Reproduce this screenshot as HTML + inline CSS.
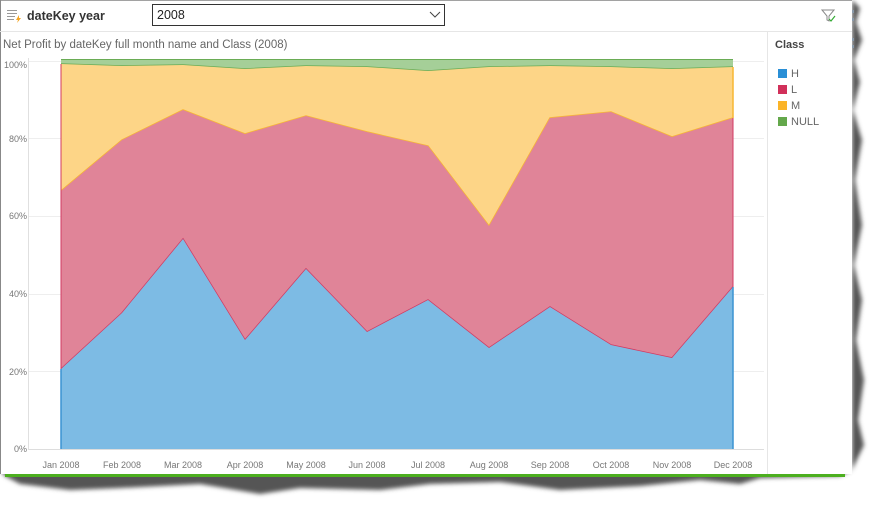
<!DOCTYPE html>
<html><head><meta charset="utf-8"><style>
body{margin:0;width:892px;height:515px;background:#fff;position:relative;overflow:hidden;font-family:"Liberation Sans",sans-serif}
</style></head><body>
<svg width="892" height="515" style="position:absolute;left:0;top:0" font-family="Liberation Sans, sans-serif">
<defs><filter id="b"><feGaussianBlur stdDeviation="2"/></filter></defs>
<!-- shadow/torn edges -->
<path d="M852,0 L860,8 L856,22 L862,40 L854,60 L860,82 L853,110 L862,140 L855,180 L862,225 L854,265 L862,300 L856,340 L864,380 L858,420 L864,445 L852,470 L840,476 L760,478 L740,484 L700,480 L640,486 L560,490 L500,482 L430,484 L380,490 L300,488 L260,494 L200,484 L120,488 L70,490 L20,484 L5,476 L0,470 L852,470 Z" fill="#555" filter="url(#b)"/>
<rect x="5" y="474" width="840" height="3" fill="#4caf1f"/>
<rect x="0" y="0" width="852" height="474" fill="#fff"/>
<line x1="0" y1="0" x2="852" y2="0" stroke="#444"/>
<line x1="0.5" y1="0" x2="0.5" y2="474" stroke="#888"/>
<line x1="0" y1="31.5" x2="852" y2="31.5" stroke="#e6e6e6"/>
<line x1="767.5" y1="32" x2="767.5" y2="474" stroke="#e6e6e6"/>
<g stroke="#999" stroke-width="1"><line x1="7" y1="10.5" x2="17" y2="10.5"/><line x1="7" y1="13.5" x2="17" y2="13.5"/><line x1="7" y1="16.5" x2="15" y2="16.5"/><line x1="7" y1="19.5" x2="14" y2="19.5"/></g>
<path d="M19,15 L16,20 L18,20 L17,23 L21,18 L19,18 Z" fill="#f5a623"/>
<text x="27" y="20" font-size="12.5" font-weight="bold" fill="#333">dateKey year</text>
<rect x="152.5" y="4.5" width="292" height="21" fill="#fff" stroke="#333"/>
<text x="157" y="19" font-size="12.5" fill="#222">2008</text>
<path d="M430,12 L435,17 L440,12" fill="none" stroke="#444"/>
<path d="M822,10 L834,10 L829,16 L829,21 L827,20 L827,16 Z" fill="none" stroke="#888"/>
<path d="M829,19 L831,21 L835,16" fill="none" stroke="#3a3" stroke-width="1.2"/>
<text x="3" y="48" font-size="11.5" fill="#666">Net Profit by dateKey full month name and Class (2008)</text>
<g stroke="#eee"><line x1="29" y1="61.5" x2="764" y2="61.5"/><line x1="29" y1="138.5" x2="764" y2="138.5"/><line x1="29" y1="216.5" x2="764" y2="216.5"/><line x1="29" y1="294.5" x2="764" y2="294.5"/><line x1="29" y1="371.5" x2="764" y2="371.5"/></g>
<line x1="29" y1="449.5" x2="764" y2="449.5" stroke="#ddd"/>
<line x1="28.5" y1="58" x2="28.5" y2="450" stroke="#e0e0e0"/>
<g font-size="9" fill="#777" text-anchor="end"><text x="27" y="68">100%</text><text x="27" y="142">80%</text><text x="27" y="219">60%</text><text x="27" y="297">40%</text><text x="27" y="375">20%</text><text x="27" y="452">0%</text></g>
<polygon points="61,59 733,59 733,67 672,69 611,67 550,66 489,67 428,71 367,67 306,66 245,69 183,65 122,66 61,64" fill="#a5cf98"/>
<polyline points="61,64 122,66 183,65 245,69 306,66 367,67 428,71 489,67 550,66 611,67 672,69 733,67" fill="none" stroke="#6aac55" stroke-width="1.5"/>
<line x1="61" y1="59.5" x2="733" y2="59.5" stroke="#6aac55" stroke-width="1"/>
<polygon points="61,64 122,66 183,65 245,69 306,66 367,67 428,71 489,67 550,66 611,67 672,69 733,67 733,118 672,137 611,112 550,118 489,226 428,146 367,132 306,116 245,134 183,110 122,140 61,191" fill="#fdd587"/>
<polyline points="61,191 122,140 183,110 245,134 306,116 367,132 428,146 489,226 550,118 611,112 672,137 733,118" fill="none" stroke="#f7b733" stroke-width="1.5"/>
<polygon points="61,191 122,140 183,110 245,134 306,116 367,132 428,146 489,226 550,118 611,112 672,137 733,118 733,287 672,358 611,345 550,307 489,348 428,300 367,332 306,269 245,340 183,239 122,313 61,369" fill="#e08498"/>
<polyline points="61,369 122,313 183,239 245,340 306,269 367,332 428,300 489,348 550,307 611,345 672,358 733,287" fill="none" stroke="#d23a62" stroke-width="1.5"/>
<polygon points="61,369 122,313 183,239 245,340 306,269 367,332 428,300 489,348 550,307 611,345 672,358 733,287 733,449 61,449" fill="#7dbbe4"/>
<line x1="61" y1="64" x2="61" y2="369" stroke="#d23a62" stroke-width="1"/>
<line x1="61" y1="369" x2="61" y2="449" stroke="#3b93d2" stroke-width="1.5"/>
<line x1="733" y1="287" x2="733" y2="449" stroke="#3b93d2" stroke-width="1.5"/>
<line x1="733" y1="118" x2="733" y2="287" stroke="#d23a62" stroke-width="1"/>
<line x1="733" y1="67" x2="733" y2="118" stroke="#f7b733" stroke-width="1.5"/>
<g font-size="9" fill="#777" text-anchor="middle"><text x="61" y="468">Jan 2008</text><text x="122" y="468">Feb 2008</text><text x="183" y="468">Mar 2008</text><text x="245" y="468">Apr 2008</text><text x="306" y="468">May 2008</text><text x="367" y="468">Jun 2008</text><text x="428" y="468">Jul 2008</text><text x="489" y="468">Aug 2008</text><text x="550" y="468">Sep 2008</text><text x="611" y="468">Oct 2008</text><text x="672" y="468">Nov 2008</text><text x="733" y="468">Dec 2008</text></g>
<text x="775" y="48" font-size="11" font-weight="bold" fill="#444">Class</text>
<rect x="778" y="69" width="9" height="9" fill="#2a8fd6"/><text x="791" y="77" font-size="11" fill="#666">H</text>
<rect x="778" y="85" width="9" height="9" fill="#d1305a"/><text x="791" y="93" font-size="11" fill="#666">L</text>
<rect x="778" y="101" width="9" height="9" fill="#fbb428"/><text x="791" y="109" font-size="11" fill="#666">M</text>
<rect x="778" y="117" width="9" height="9" fill="#64a84b"/><text x="791" y="125" font-size="11" fill="#666">NULL</text>
<g fill="#8a9aaa"><rect x="852" y="10" width="2" height="3"/><rect x="852" y="18" width="2" height="3"/><rect x="852" y="38" width="2" height="3"/><rect x="852" y="45" width="2" height="3"/></g>
</svg>
</body></html>
